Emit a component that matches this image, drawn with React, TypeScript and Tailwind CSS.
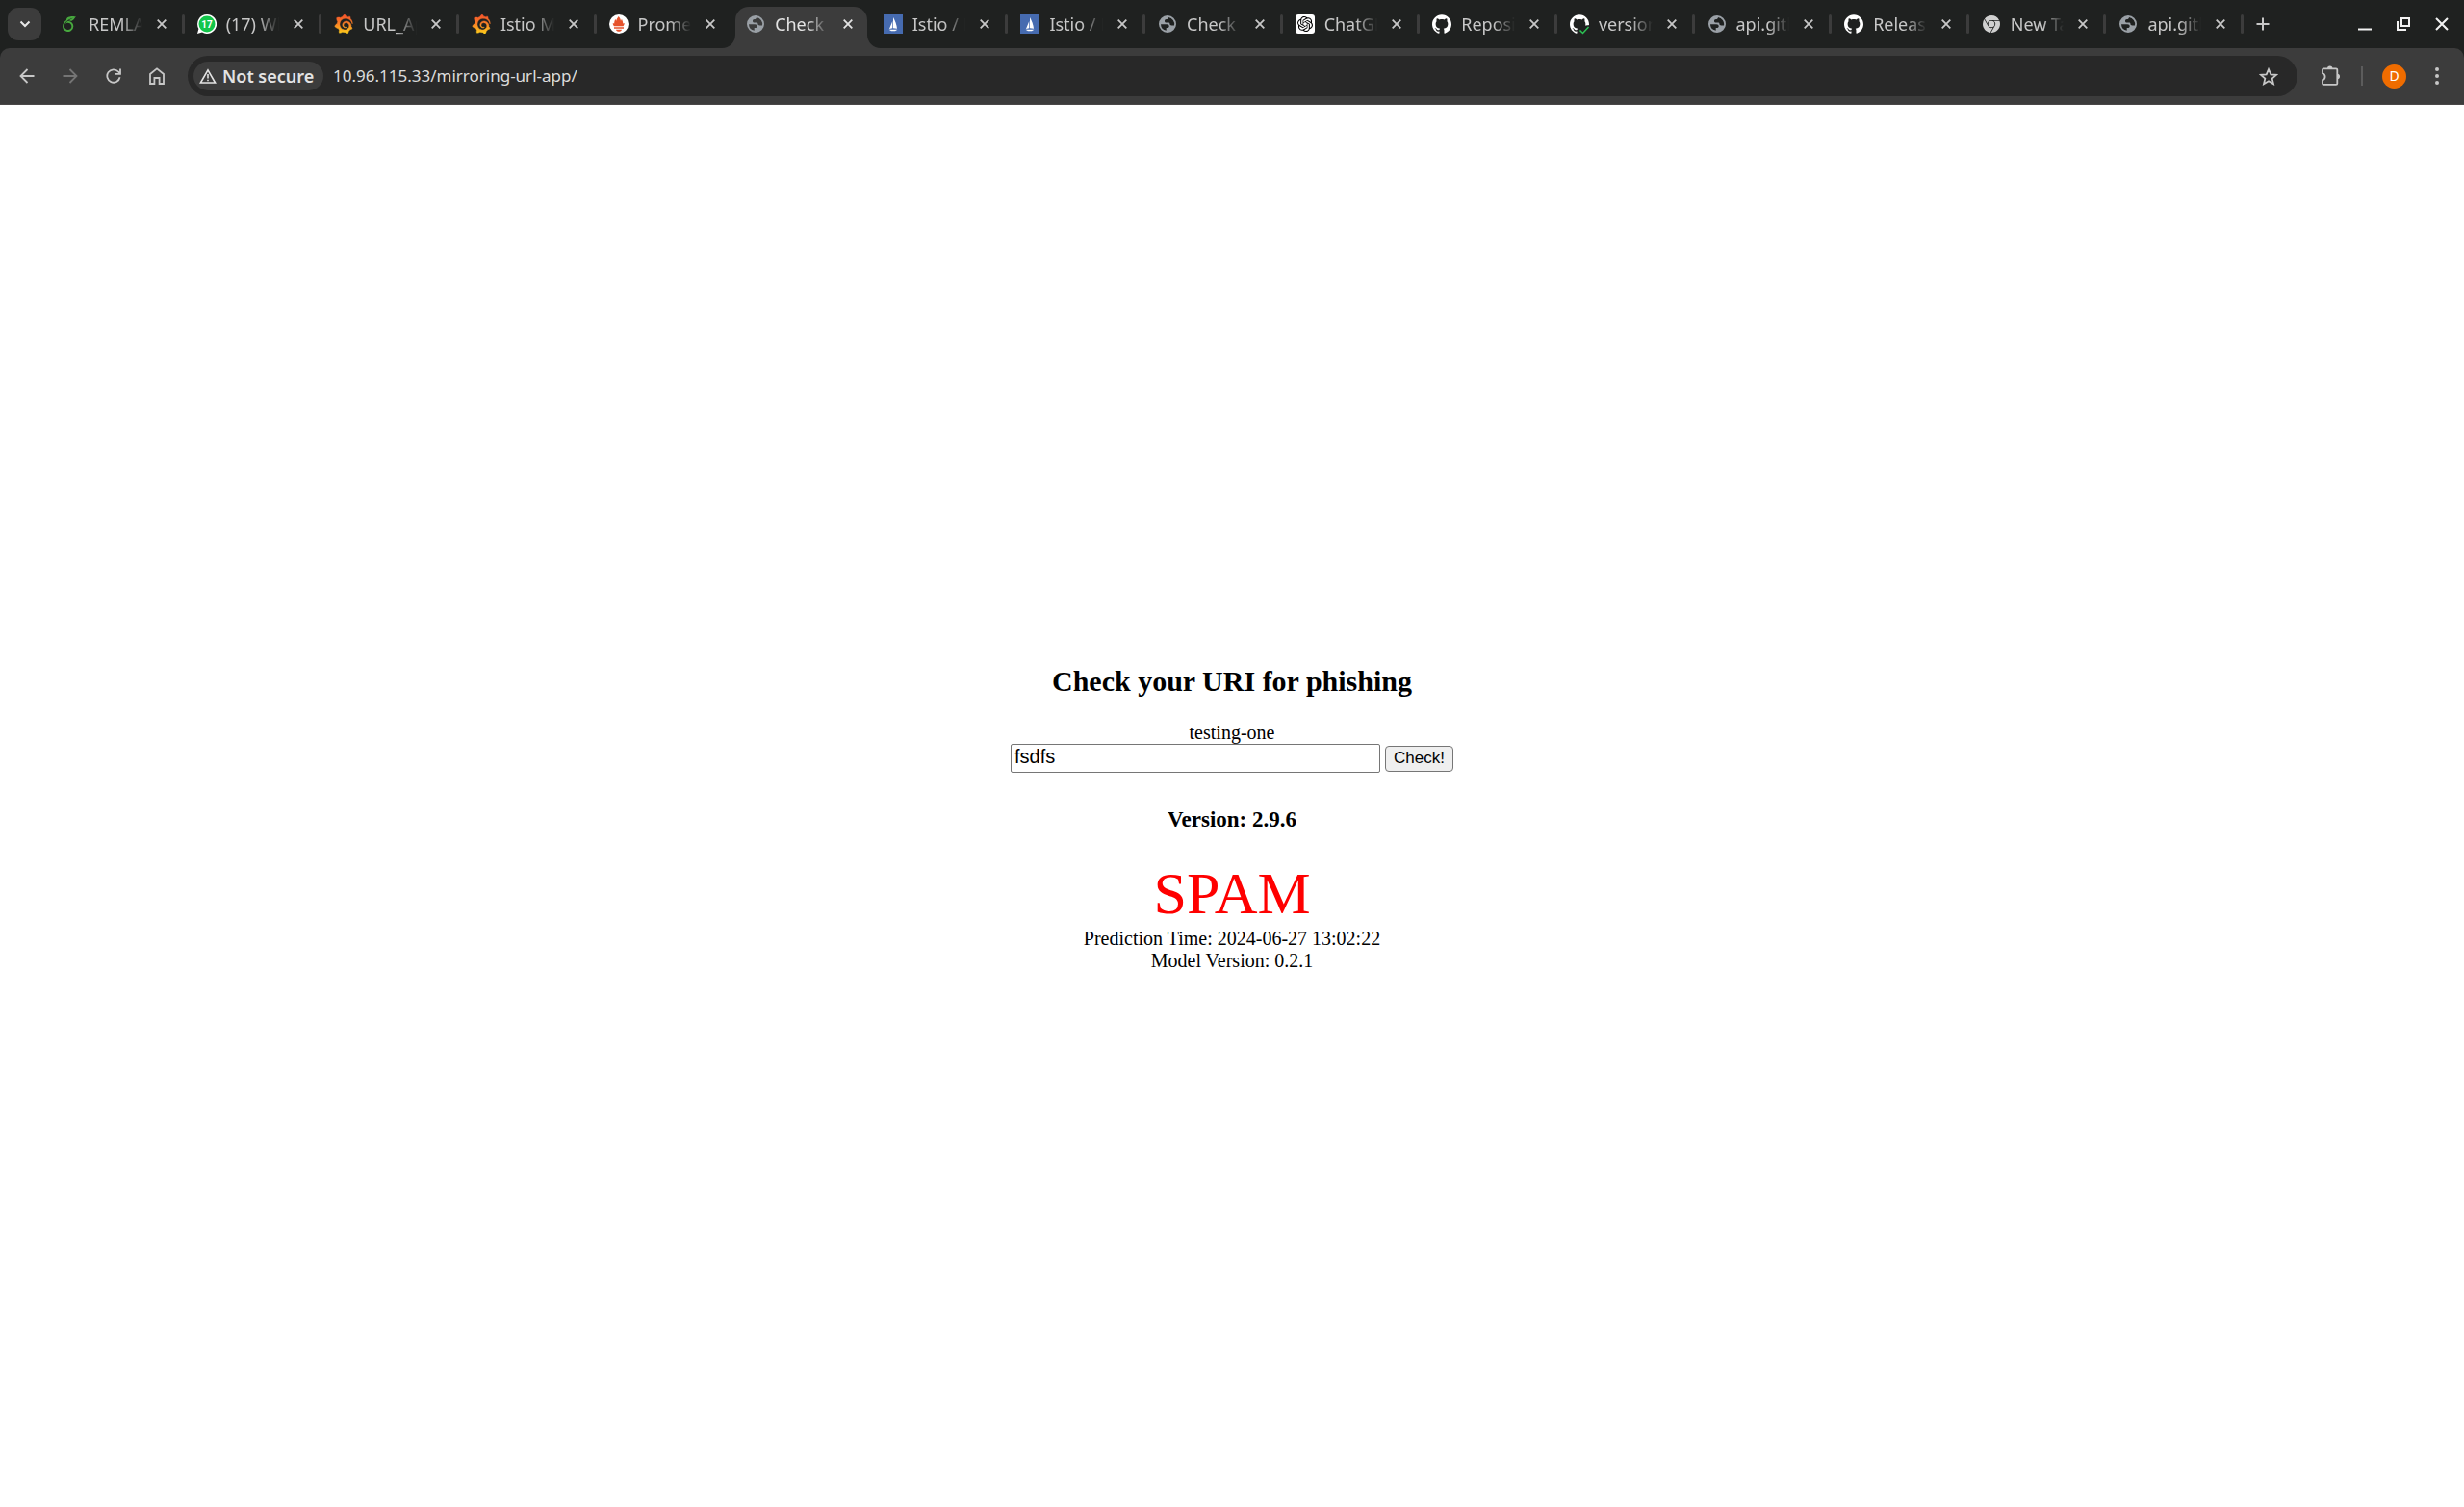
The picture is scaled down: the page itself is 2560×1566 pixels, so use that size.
import React from "react";
import { SiGrafana, SiPrometheus, SiOpenai, SiGithub, SiGooglechrome, SiOverleaf } from "react-icons/si";

function Overleaf() {
  return <SiOverleaf className="size-4 text-[#47a83e]" />;
}

function WhatsApp() {
  return (
    <svg viewBox="0 0 20 20" className="size-5">
      <path d="M10 0a10 10 0 1 1-5 18.6L0 20l1.400-5A10 10 0 0 1 10 0z" fill="#fff" />
      <circle cx="10" cy="10" r="8.500" fill="#12c64a" />
      <text x="10" y="13.500" textAnchor="middle" fontSize="10" fontWeight="700" fill="#fff" fontFamily="Roboto, sans-serif">17</text>
    </svg>
  );
}

function Grafana() {
  const id = React.useId();
  return (
    <>
      <svg width="0" height="0" className="absolute">
        <defs>
          <linearGradient id={id} x1="0" y1="0" x2="0" y2="1">
            <stop offset="0" stopColor="#f4502b" />
            <stop offset="0.500" stopColor="#f98226" />
            <stop offset="1" stopColor="#fdd01a" />
          </linearGradient>
        </defs>
      </svg>
      <SiGrafana className="size-5" style={{ fill: `url(#${id})`, stroke: `url(#${id})` }} strokeWidth={0.6} />
    </>
  );
}

function Prometheus() {
  return (
    <svg viewBox="0 0 20 20" className="size-5">
      <circle cx="10" cy="10" r="10" fill="#fff" />
      <path d="M5 12.300c-.8-1-1.300-2-1.200-3.300l1.400.6c-.1-2 .6-3 1-4.800l1 2c.4-2 1.300-3 2.500-4.800 1 1.500 2 2.500 2.300 4.800l1-2c.5 2 1.400 2.800 1.200 4.800l1.500-.6c0 1.300-.5 2.300-1.200 3.300zM5 13.200h10v1.600H5zM7 15.700h6c-.3 1.500-1.500 2.100-3 2.100s-2.700-.6-3-2.100z" fill="#e6522c" />
    </svg>
  );
}

function Globe() {
  return (
    <svg viewBox="0 0 20 20" className="size-5">
      <path
        fillRule="evenodd"
        d="M10 1a9 9 0 1 0 0 18 9 9 0 0 0 0-18zM3 10.200h6.300c1.500 0 2.400.8 2.400 2s-.8 1.800-1.900 1.800H8.700v2.800A7 7 0 0 1 3 10.200zM11 3.100c-.2 1.500-1 2-2.200 2-1.200.1-1.900.8-1.800 1.900.1 1 .8 1.500 2 1.500h1.900c1 0 1.500.5 1.500 1.300 0 1 .7 1.600 1.900 1.600H17A7 7 0 0 0 11 3.100z"
        fill="#9aa0a6"
      />
    </svg>
  );
}

function Istio() {
  return (
    <svg viewBox="0 0 20 20" className="size-5">
      <path d="M0 0h20v20H0z" fill="#466bb0" />
      <path d="M9.300 7v7.200L6 15zM10 3c2 3.500 3.500 7 4 11.800L10 14.300zM5.500 15.800h9L12 17.200H8z" fill="#fff" />
    </svg>
  );
}

function OpenAi() {
  return (
    <span className="flex size-5 items-center justify-center rounded-[3px] bg-white">
      <SiOpenai className="size-4 text-black" />
    </span>
  );
}

function GitHub() {
  return <SiGithub className="size-5 text-white" />;
}

function GitHubCheck() {
  return (
    <span className="relative flex">
      <SiGithub className="size-5 text-white" />
      <svg viewBox="0 0 12 10" className="absolute -right-px -bottom-px h-[10px] w-3">
        <path d="M0 4 3 1 12 0v10H0z" fill="#1f2120" />
        <path d="M1.500 5.500 4.500 8.500 10.500 2" fill="none" stroke="#2bc253" strokeWidth="1.500" />
      </svg>
    </span>
  );
}

function Chrome() {
  return <SiGooglechrome className="size-[18px] text-[#d0d0d0]" />;
}

const tabs: { title: string; icon: () => React.ReactElement; active?: boolean }[] = [
  { title: "REMLA", icon: Overleaf },
  { title: "(17) WhatsApp", icon: WhatsApp },
  { title: "URL_App", icon: Grafana },
  { title: "Istio Mesh", icon: Grafana },
  { title: "Prometheus", icon: Prometheus },
  { title: "Check", icon: Globe, active: true },
  { title: "Istio / Docs", icon: Istio },
  { title: "Istio / Docs", icon: Istio },
  { title: "Check", icon: Globe },
  { title: "ChatGPT", icon: OpenAi },
  { title: "Repository", icon: GitHub },
  { title: "version", icon: GitHubCheck },
  { title: "api.github", icon: Globe },
  { title: "Releases", icon: GitHub },
  { title: "New Tab", icon: Chrome },
  { title: "api.github", icon: Globe },
];

function Flare({ flip }: { flip?: boolean }) {
  return (
    <svg viewBox="0 0 14 14" className={flip ? "absolute bottom-0 left-full size-[14px] -scale-x-100" : "absolute right-full bottom-0 size-[14px]"}>
      <path d="M14 0v14H0A14 14 0 0 0 14 0z" fill="#3c3c3c" />
    </svg>
  );
}

function Tab({ title, icon: Icon, active, separator }: { title: string; icon: () => React.ReactElement; active?: boolean; separator: boolean }) {
  return (
    <div className="relative flex h-[50px] min-w-0 flex-1 items-center pr-[13px] pl-[14px]">
      {active && (
        <div className="absolute inset-x-[3px] top-[7px] bottom-0 rounded-t-[14px] bg-[#3c3c3c]">
          <Flare />
          <Flare flip />
        </div>
      )}
      <span className="relative flex size-5 shrink-0 items-center justify-center">
        <Icon />
      </span>
      <span className={`relative mx-[10px] min-w-0 flex-1 overflow-hidden mask-r-from-60% mask-r-to-100% text-lg leading-6 whitespace-nowrap ${active ? "text-[#e3e3e3]" : "text-[#c7c7c7]"}`}>
        {title}
      </span>
      <button aria-label={`Close ${title}`} className="relative flex size-5 shrink-0 items-center justify-center">
        <svg viewBox="0 0 10 10" className={active ? "size-[10px] text-[#e3e3e3]" : "size-[10px] text-[#c7c7c7]"}>
          <path d="M.7.7l8.600 8.600M9.300.7L.7 9.300" stroke="currentColor" strokeWidth="1.800" />
        </svg>
      </button>
      {separator && <span className="absolute top-[15px] -right-px h-5 w-[3px] rounded-full bg-[#3c3c3c]" />}
    </div>
  );
}

function Tool({ label, children, dim }: { label: string; children: React.ReactNode; dim?: boolean }) {
  return (
    <button aria-label={label} className={`flex w-[45px] items-center justify-center ${dim ? "text-[#757575]" : "text-[#c7c7c7]"}`}>
      {children}
    </button>
  );
}

function TabStrip() {
  return (
    <div className="flex h-[50px] bg-[#1f2120]">
      <div className="flex w-12 shrink-0 items-center pl-2">
        <button aria-label="Search tabs" className="flex h-[34px] w-[35px] items-center justify-center rounded-[11px] bg-[#3c3c3c]">
          <svg viewBox="0 0 12 8" className="h-2 w-3">
            <path d="M1.500 1.500 6 6l4.500-4.500" fill="none" stroke="#e8e8e8" strokeWidth="2" />
          </svg>
        </button>
      </div>
      {tabs.map((tab, i) => (
        <Tab key={i} {...tab} separator={!tab.active && !tabs[i + 1]?.active} />
      ))}
      <div className="flex w-[230px] shrink-0 items-center pr-4 pl-[14px]">
        <button aria-label="New tab" className="flex size-[14px] items-center justify-center">
          <svg viewBox="0 0 14 14" className="size-[14px]">
            <path d="M7 .5v13M.5 7h13" stroke="#c7c7c7" strokeWidth="2" />
          </svg>
        </button>
        <div className="ml-auto flex items-center gap-[26px]">
          <button aria-label="Minimize">
            <svg viewBox="0 0 14 14" className="size-[14px]">
              <path d="M0 12.500h14" stroke="#f2f2f2" strokeWidth="2" />
            </svg>
          </button>
          <button aria-label="Restore">
            <svg viewBox="0 0 14 14" className="size-[14px]">
              <path d="M5 1h8v8H5zM1 4v9h9" fill="none" stroke="#f2f2f2" strokeWidth="2" />
            </svg>
          </button>
          <button aria-label="Close window">
            <svg viewBox="0 0 14 14" className="size-[14px]">
              <path d="M1 1l12 12M13 1L1 13" stroke="#f2f2f2" strokeWidth="2" />
            </svg>
          </button>
        </div>
      </div>
    </div>
  );
}

function Toolbar() {
  return (
    <div className="bg-[#1f2120]">
      <div className="flex h-[59px] items-center rounded-t-[10px] border-b border-[#4a4848] bg-[#3c3c3c] pl-[5px]">
        <Tool label="Back">
          <svg viewBox="0 0 16 16" className="size-4">
            <path d="M15.500 8H2M8.500 1 1.500 8l7 7" fill="none" stroke="currentColor" strokeWidth="1.800" />
          </svg>
        </Tool>
        <Tool label="Forward" dim>
          <svg viewBox="0 0 16 16" className="size-4">
            <path d="M.5 8H14M7.500 1l7 7-7 7" fill="none" stroke="currentColor" strokeWidth="1.800" />
          </svg>
        </Tool>
        <Tool label="Reload">
          <svg viewBox="0 0 16 16" className="size-4">
            <path d="M14.600 9.300A6.700 6.700 0 1 1 13 3.500l1.500 1.700M15 .5v5.300H9.500" fill="none" stroke="currentColor" strokeWidth="1.800" />
          </svg>
        </Tool>
        <Tool label="Home">
          <svg viewBox="0 0 16 18" className="h-[18px] w-4">
            <path d="M1 7l7-5.600L15 7v10h-4.400v-6H5.400v6H1z" fill="none" stroke="currentColor" strokeWidth="1.800" />
          </svg>
        </Tool>
        <div className="ml-[10px] flex h-[42px] min-w-0 flex-1 items-center rounded-full bg-[#282828] pr-5 pl-[6px]">
          <button className="flex h-[30px] w-[135px] shrink-0 items-center gap-[6px] rounded-full bg-[#3c3c3c] pl-[6px] text-[#e3e3e3]">
            <svg viewBox="0 0 18 16" className="h-4 w-[18px] shrink-0">
              <path d="M9 1.800 16.600 15H1.400z" fill="none" stroke="currentColor" strokeWidth="1.600" />
              <path d="M9 6v4.500M9 11.700v1.600" stroke="currentColor" strokeWidth="1.600" />
            </svg>
            <span className="text-lg leading-6 font-semibold whitespace-nowrap">Not secure</span>
          </button>
          <input
            aria-label="Address"
            defaultValue="10.96.115.33/mirroring-url-app/"
            className="ml-[10px] min-w-0 flex-1 bg-transparent text-[17px] leading-6 text-[#dcdcdc] outline-none"
          />
          <button aria-label="Bookmark this page" className="flex size-5 items-center justify-center">
            <svg viewBox="0 0 20 19" className="h-[19px] w-5">
              <path d="M10 2l2.300 5.300 5.700.5-4.300 3.800 1.300 5.600-5-3-5 3 1.300-5.600L2 7.800l5.700-.5z" fill="none" stroke="#c7c7c7" strokeWidth="1.800" />
            </svg>
          </button>
        </div>
        <div className="flex w-[173px] shrink-0 items-center pl-6">
          <button aria-label="Extensions">
            <svg viewBox="0 0 22 22" className="size-[22px] text-[#c7c7c7]">
              <path d="M2 4.500q0-1.200 1.200-1.200H16q1.300 0 1.300 1.200v14.200q0 1.200-1.300 1.200H3.200Q2 19.900 2 18.700v-3.500c3.500-.8 3.500-6 0-6.800z" fill="none" stroke="currentColor" strokeWidth="1.800" />
              <path d="M7 3.300a2.700 2.700 0 0 1 5.400 0zM17.300 8.800a2.700 2.700 0 0 1 0 5.400z" fill="currentColor" />
            </svg>
          </button>
          <span className="ml-5 h-5 w-[2px] bg-[#5c5c5c]" />
          <button aria-label="Profile" className="ml-5 flex size-[25px] items-center justify-center rounded-full bg-[#ef6c00] text-sm text-white">
            D
          </button>
          <button aria-label="Menu" className="ml-[30px]">
            <svg viewBox="0 0 4 18" className="h-[18px] w-1">
              <path d="M2 2v0M2 9v0M2 16v0" stroke="#c7c7c7" strokeWidth="4" strokeLinecap="round" />
            </svg>
          </button>
        </div>
      </div>
    </div>
  );
}

export default function App() {
  return (
    <div className="flex min-h-screen flex-col bg-white">
      <header className="font-['Noto_Sans',sans-serif]">
        <TabStrip />
        <Toolbar />
      </header>
      <main className="flex flex-1 flex-col items-center justify-center text-center font-['Liberation_Serif',serif] text-xl leading-[23px] text-black">
        <h2 className="my-[25px] text-3xl leading-[34px] font-bold">Check your URI for phishing</h2>
        <label htmlFor="uri">testing-one</label>
        <form className="flex items-end gap-[5px] font-['Liberation_Sans',sans-serif]" onSubmit={(e) => e.preventDefault()}>
          <input id="uri" defaultValue="fsdfs" className="h-[30px] w-96 rounded-[2px] border border-[#767676] bg-white px-[3px] pb-[2px] text-xl leading-6" />
          <button className="mb-px h-[27px] w-[71px] rounded-[4px] border border-[#767676] bg-[#efefef] text-[17px] leading-5">Check!</button>
        </form>
        <h3 className="mt-[35px] mb-[27px] text-[23px] leading-[27px] font-bold">Version: 2.9.6</h3>
        <p className="text-[62px] leading-[72px] text-[#ff0000]">SPAM</p>
        <p>Prediction Time: 2024-06-27 13:02:22</p>
        <p>Model Version: 0.2.1</p>
      </main>
    </div>
  );
}
